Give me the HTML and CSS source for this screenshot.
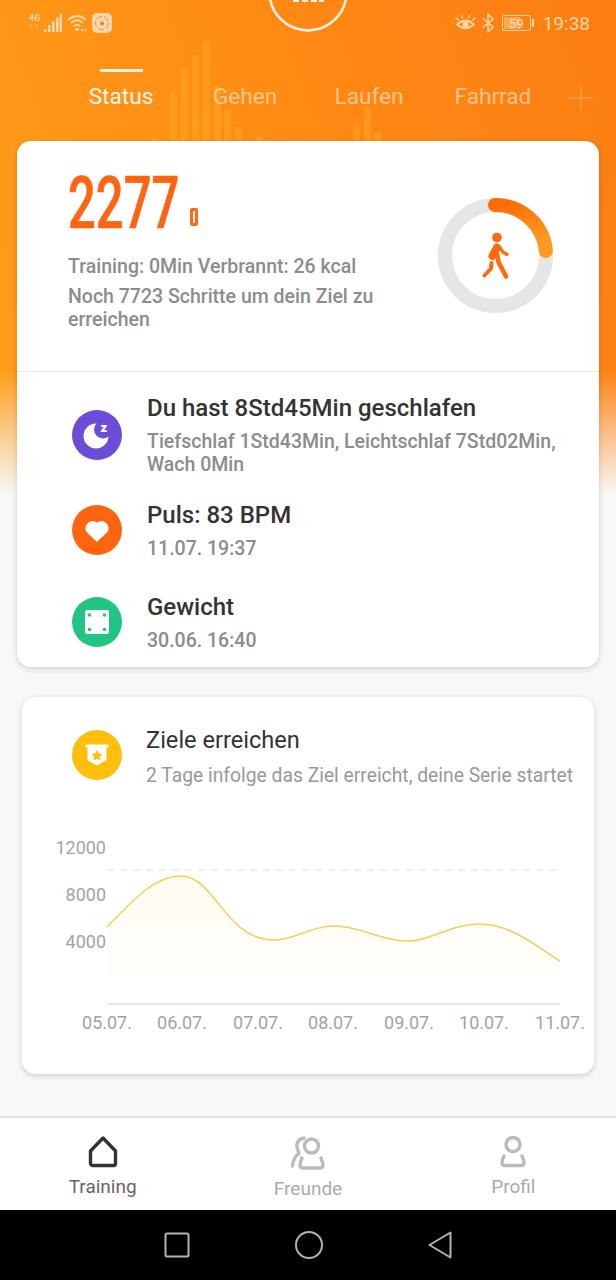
FILE: index.html
```html
<!DOCTYPE html>
<html>
<head>
    <title>Status</title>
    <link rel="stylesheet" href="styles.css">
</head>
<body>
    <div class="phone">
        <!-- faint bars behind the tabs -->
        <svg class="hero-bars" width="616" height="141" viewBox="0 0 616 141">
            <rect x="150" y="137" width="7" height="10" rx="3"/>
            <rect x="170" y="91" width="7" height="60" rx="3"/>
            <rect x="181" y="68" width="7" height="80" rx="3"/>
            <rect x="192" y="55" width="7" height="90" rx="3"/>
            <rect x="203" y="41" width="7" height="100" rx="3"/>
            <rect x="214" y="85" width="7" height="60" rx="3"/>
            <rect x="224" y="108" width="7" height="40" rx="3"/>
            <rect x="235" y="127" width="7" height="20" rx="3"/>
            <rect x="256" y="136" width="7" height="10" rx="3"/>
            <rect x="353" y="125" width="7" height="20" rx="3"/>
            <rect x="364" y="107" width="7" height="40" rx="3"/>
            <rect x="374" y="132" width="7" height="14" rx="3"/>
        </svg>

        <!-- call badge cut off by the top of the screen -->
        <svg class="top-badge" width="84" height="36" viewBox="0 0 84 36">
            <circle cx="42" cy="-8" r="38.5" fill="none" stroke="#fff4e2" stroke-width="2.5"/>
            <rect x="27" y="0" width="6" height="2" fill="#fff4e2"/>
            <rect x="36" y="0" width="6" height="2" fill="#fff4e2"/>
            <rect x="45" y="0" width="6" height="2" fill="#fff4e2"/>
            <rect x="53" y="0" width="5" height="2" fill="#fff4e2"/>
        </svg>

        <div class="statusbar">
            <div class="status-group">
                <div class="net-label">
                    <span class="net-top">4G</span>
                    <span class="net-bottom">1.1</span>
                </div>
                <svg width="18" height="18" viewBox="0 0 18 18" class="status-icon">
                    <rect x="0" y="15" width="2.4" height="3"/>
                    <rect x="4" y="11" width="2.6" height="7"/>
                    <rect x="8" y="7" width="2.6" height="11"/>
                    <rect x="12" y="3.5" width="2.6" height="14.5"/>
                    <rect x="15.6" y="0" width="2.4" height="18"/>
                </svg>
                <svg width="20" height="18" viewBox="0 0 20 18" class="wifi">
                    <path d="M1 6 Q10 -2 19 6"/>
                    <path d="M4 9 Q10 3.5 16 9"/>
                    <path d="M7 12 Q10 9.5 13 12"/>
                    <circle cx="10" cy="15.5" r="1.8" class="wifi-dot"/>
                    <circle cx="15" cy="16" r="1.2" class="wifi-dot"/>
                    <circle cx="18.5" cy="16" r="1.2" class="wifi-dot"/>
                </svg>
                <svg width="20" height="20" viewBox="0 0 20 20">
                    <rect width="20" height="20" rx="5" fill="#fbd6a6"/>
                    <circle cx="10" cy="10" r="6.5" fill="none" stroke="#e6934a" stroke-width="1" stroke-dasharray="6 2"/>
                    <circle cx="10" cy="10.5" r="2" fill="#d98a3e"/>
                </svg>
            </div>
            <div class="status-group status-right">
                <svg width="21" height="18" viewBox="0 0 21 18" class="eye">
                    <path d="M2 10.5 Q10.5 2.5 19 10.5 Q10.5 18 2 10.5 Z"/>
                    <path d="M3.5 6.5 L1 3.5 M7.5 4 L6.5 1 M13.5 4 L14.5 1 M17.5 6.5 L20 3.5"/>
                    <circle cx="10.5" cy="10.5" r="3" class="eye-dot"/>
                </svg>
                <svg width="12" height="20" viewBox="0 0 12 20" class="bluetooth">
                    <path d="M1 5.5 L11 14 L6 19 V1 L11 6 L1 14.5"/>
                </svg>
                <div class="battery">
                    <div class="battery-body">
                        <span class="battery-fill"></span>
                        <span class="battery-num">59</span>
                    </div>
                    <span class="battery-nub"></span>
                </div>
                <span class="clock">19:38</span>
            </div>
        </div>

        <div class="tabs">
            <div class="tab tab-active">Status</div>
            <div class="tab">Gehen</div>
            <div class="tab">Laufen</div>
            <div class="tab">Fahrrad</div>
            <svg class="tab-plus" width="24" height="24" viewBox="0 0 24 24">
                <path d="M12 0 V24 M0 12 H24"/>
            </svg>
        </div>

        <div class="main">
            <div class="card card-summary">
                <div class="steps">
                    <div class="steps-text">
                        <div class="steps-count">
                            <span class="steps-number">2277</span>
                            <span class="band-icon"></span>
                        </div>
                        <p class="steps-line">Training: 0Min Verbrannt: 26 kcal</p>
                        <p class="steps-goal">Noch 7723 Schritte um dein Ziel zu erreichen</p>
                    </div>
                    <svg class="ring" width="116" height="116" viewBox="438 198 116 116">
                        <defs>
                            <linearGradient id="ringGrad" x1="0" y1="0" x2="0.4" y2="1">
                                <stop offset="0" stop-color="#ff6a05"/>
                                <stop offset="1" stop-color="#ff9a1f"/>
                            </linearGradient>
                        </defs>
                        <circle cx="495.5" cy="255.5" r="50.5" fill="none" stroke="#e6e6e6" stroke-width="14"/>
                        <path d="M495 205 A50.5 50.5 0 0 1 545.9 251" fill="none" stroke="url(#ringGrad)" stroke-width="14" stroke-linecap="round"/>
                        <circle cx="497" cy="237.5" r="4.8" fill="#ff6a0c"/>
                        <path d="M497 247.5 L492.5 256" stroke="#ff6a0c" stroke-width="8" stroke-linecap="round"/>
                        <path d="M500 248 L503.5 252.5 L507 254.5" fill="none" stroke="#ff6a0c" stroke-width="3.4" stroke-linecap="round" stroke-linejoin="round"/>
                        <path d="M497 254 L498.5 262 L506 276.5" fill="none" stroke="#ff6a0c" stroke-width="4.6" stroke-linecap="round" stroke-linejoin="round"/>
                        <path d="M491.5 263 L491 268.5 L484.5 275.5" fill="none" stroke="#ff6a0c" stroke-width="4" stroke-linecap="round" stroke-linejoin="round"/>
                    </svg>
                </div>

                <div class="stats">
                    <div class="stat stat-sleep">
                        <svg class="stat-icon" width="50" height="50" viewBox="0 0 50 50">
                            <circle cx="25" cy="25" r="25" fill="#6b4dd8"/>
                            <circle cx="24" cy="26" r="12.5" fill="#fff"/>
                            <circle cx="31" cy="19.5" r="9" fill="#6b4dd8"/>
                            <text x="28.5" y="22" class="sleep-z">z</text>
                        </svg>
                        <div class="stat-text">
                            <h3 class="stat-title">Du hast 8Std45Min geschlafen</h3>
                            <p class="stat-sub">Tiefschlaf 1Std43Min, Leichtschlaf 7Std02Min, Wach 0Min</p>
                        </div>
                    </div>
                    <div class="stat">
                        <svg class="stat-icon" width="50" height="50" viewBox="0 0 50 50">
                            <circle cx="25" cy="25" r="25" fill="#ff6410"/>
                            <path d="M25 36 L15 26.5 A6.5 6.5 0 0 1 25 18.5 A6.5 6.5 0 0 1 35 26.5 Z" fill="#fff" stroke="#fff" stroke-width="1.5" stroke-linejoin="round"/>
                        </svg>
                        <div class="stat-text">
                            <h3 class="stat-title">Puls: 83 BPM</h3>
                            <p class="stat-sub">11.07. 19:37</p>
                        </div>
                    </div>
                    <div class="stat">
                        <svg class="stat-icon" width="50" height="50" viewBox="0 0 50 50">
                            <circle cx="25" cy="25" r="25" fill="#22c483"/>
                            <rect x="13" y="13" width="24" height="24" rx="2.5" fill="#fff"/>
                            <circle cx="17.5" cy="18" r="1.8" fill="#22c483"/>
                            <circle cx="32.5" cy="18" r="1.8" fill="#22c483"/>
                            <circle cx="17.5" cy="32.5" r="1.8" fill="#22c483"/>
                            <circle cx="32.5" cy="32.5" r="1.8" fill="#22c483"/>
                        </svg>
                        <div class="stat-text">
                            <h3 class="stat-title">Gewicht</h3>
                            <p class="stat-sub">30.06. 16:40</p>
                        </div>
                    </div>
                </div>
            </div>

            <div class="card card-goal">
                <div class="goal-head">
                    <svg class="stat-icon goal-icon" width="50" height="50" viewBox="0 0 50 50">
                        <circle cx="25" cy="25" r="25" fill="#ffbf0a"/>
                        <path d="M14 15 H36 V17 H34 V30 L25 35 L16 30 V17 H14 Z" fill="#fff" stroke="#fff" stroke-width="1" stroke-linejoin="round"/>
                        <path d="M25 20 L26.8 23.6 L30.6 24 L27.8 26.6 L28.6 30.4 L25 28.5 L21.4 30.4 L22.2 26.6 L19.4 24 L23.2 23.6 Z" fill="#ffbf0a"/>
                    </svg>
                    <div>
                        <h3 class="goal-title">Ziele erreichen</h3>
                        <p class="goal-sub">2 Tage infolge das Ziel erreicht, deine Serie startet</p>
                    </div>
                </div>
                <svg class="chart" width="573" height="210" viewBox="22 830 573 210">
                    <defs>
                        <linearGradient id="areaGrad" x1="0" y1="0" x2="0" y2="1">
                            <stop offset="0" stop-color="#ffd966" stop-opacity="0.1"/>
                            <stop offset="1" stop-color="#ffd966" stop-opacity="0.03"/>
                        </linearGradient>
                    </defs>
                    <text x="106" y="854" class="axis-label axis-y">12000</text>
                    <text x="106" y="901" class="axis-label axis-y">8000</text>
                    <text x="106" y="948" class="axis-label axis-y">4000</text>
                    <line x1="107" y1="870" x2="560" y2="870" class="line-goal"/>
                    <path d="M107 975 V927 C125 910 150 876 181 876 C215 876 225 940 274 940 C295 940 310 926 335 926 C360 926 380 941 410 941 C430 941 450 924 480 924 C510 924 535 945 560 961 V975 Z" fill="url(#areaGrad)"/>
                    <path d="M107 927 C125 910 150 876 181 876 C215 876 225 940 274 940 C295 940 310 926 335 926 C360 926 380 941 410 941 C430 941 450 924 480 924 C510 924 535 945 560 961" class="line-steps"/>
                    <line x1="107" y1="1004" x2="560" y2="1004" class="line-axis"/>
                    <text x="107" y="1029" class="axis-label axis-x">05.07.</text>
                    <text x="182" y="1029" class="axis-label axis-x">06.07.</text>
                    <text x="258" y="1029" class="axis-label axis-x">07.07.</text>
                    <text x="333" y="1029" class="axis-label axis-x">08.07.</text>
                    <text x="409" y="1029" class="axis-label axis-x">09.07.</text>
                    <text x="484" y="1029" class="axis-label axis-x">10.07.</text>
                    <text x="560" y="1029" class="axis-label axis-x">11.07.</text>
                </svg>
            </div>
        </div>

        <div class="tabbar">
            <div class="tabbar-item tabbar-active">
                <svg width="30" height="32" viewBox="0 0 30 32" class="nav-icon">
                    <path d="M15 2 L27.5 15 V27.5 a2 2 0 0 1 -2 2 H4.5 a2 2 0 0 1 -2 -2 V15 Z"/>
                </svg>
                <span>Training</span>
            </div>
            <div class="tabbar-item">
                <svg width="34" height="34" viewBox="0 0 34 34" class="nav-icon">
                    <circle cx="20.5" cy="10" r="7"/>
                    <path d="M11 22 Q9 26 9 29 Q9 32 12 32 H29 Q32 32 32 29 Q32 26 30 22"/>
                    <path d="M13 2 Q5 4 6 11 Q7 15 8 17 Q2 22 1.5 30"/>
                </svg>
                <span>Freunde</span>
            </div>
            <div class="tabbar-item">
                <svg width="26" height="32" viewBox="0 0 26 32" class="nav-icon">
                    <circle cx="13" cy="8.5" r="7"/>
                    <path d="M4 20 Q2 24 2 26.5 Q2 29.5 5 29.5 H21 Q24 29.5 24 26.5 Q24 24 22 20"/>
                </svg>
                <span>Profil</span>
            </div>
        </div>

        <div class="sysbar">
            <svg width="26" height="26" viewBox="0 0 26 26">
                <rect x="1.5" y="1.5" width="23" height="23" rx="1.5"/>
            </svg>
            <svg width="28" height="28" viewBox="0 0 28 28">
                <circle cx="14" cy="14" r="13"/>
            </svg>
            <svg width="24" height="28" viewBox="0 0 24 28">
                <path d="M22.5 1.5 V26.5 L1.5 14 Z"/>
            </svg>
        </div>
    </div>
</body>
</html>
```

FILE: styles.css
```css
body {
    margin: 0;
    background-color: #000;
    font-family: Roboto, "Liberation Sans", sans-serif;
}

p, h3 {
    margin: 0;
}

.phone {
    position: relative;
    width: 616px;
    height: 1280px;
    overflow: hidden;
    display: flex;
    flex-direction: column;
    background-color: #f8f8f8;
    background-image:
        linear-gradient(to bottom, rgba(248, 248, 248, 0) 370px, #f8f8f8 495px),
        linear-gradient(70deg, #ff9f1a 0%, #ff8a14 55%, #fc7d12 100%);
    background-size: 100% 495px;
    background-repeat: no-repeat;
}

/* Header */
.hero-bars {
    position: absolute;
    top: 0;
    left: 0;
    fill: rgba(255, 176, 40, 0.4);
}

.top-badge {
    position: absolute;
    top: 0;
    left: 266px;
}

.statusbar {
    position: relative;
    height: 46px;
    display: flex;
    justify-content: space-between;
    align-items: center;
    padding: 0 26px 0 29px;
}

.status-group {
    display: flex;
    align-items: center;
    gap: 5px;
}

.status-right {
    gap: 6px;
}

.status-icon {
    fill: #fbd6a6;
}

.net-label {
    width: 10px;
    display: flex;
    flex-direction: column;
    color: #fbd6a6;
    font-size: 9px;
    line-height: 9px;
    font-weight: 700;
}

.net-bottom {
    opacity: 0.5;
    font-size: 7px;
}

.wifi {
    fill: none;
    stroke: #fbd6a6;
    stroke-width: 2;
}

.wifi-dot {
    fill: #fbd6a6;
    stroke: none;
}

.eye {
    fill: none;
    stroke: #fbd6a6;
    stroke-width: 1.8;
}

.eye-dot {
    fill: #fbd6a6;
    stroke: none;
}

.bluetooth {
    fill: none;
    stroke: #fbd6a6;
    stroke-width: 1.5;
}

.battery {
    display: flex;
    align-items: center;
    gap: 1px;
    margin-left: 2px;
}

.battery-body {
    position: relative;
    width: 29px;
    height: 16px;
    box-sizing: border-box;
    border: 1px solid #fbd6a6;
    border-radius: 2px;
    display: flex;
    justify-content: center;
    align-items: center;
}

.battery-fill {
    position: absolute;
    top: 1px;
    bottom: 1px;
    left: 1px;
    width: 60%;
    background-color: rgba(251, 214, 166, 0.45);
}

.battery-num {
    position: relative;
    color: #fde3c2;
    font-size: 13px;
}

.battery-nub {
    width: 2px;
    height: 8px;
    background-color: #fbd6a6;
}

.clock {
    margin-left: 3px;
    color: #fbd6a6;
    font-size: 19px;
}

.tabs {
    position: relative;
    height: 95px;
    box-sizing: border-box;
    padding: 23px 0 0 59px;
    display: flex;
}

.tab {
    width: 124px;
    text-align: center;
    color: rgba(255, 235, 210, 0.65);
    font-size: 22.6px;
    line-height: 28px;
}

.tab::before {
    content: "";
    display: block;
    width: 43px;
    height: 3px;
    margin: 0 auto 11px;
}

.tab-active {
    color: #fff8ec;
}

.tab-active::before {
    background-color: #fff4e2;
}

.tab-plus {
    margin: 17px 0 0 14px;
    fill: none;
    stroke: rgba(255, 235, 210, 0.2);
    stroke-width: 2;
}

/* Cards */
.main {
    position: relative;
    flex: 1;
    padding: 0 17px;
}

.card {
    background-color: #fff;
    border-radius: 14px;
    box-shadow: 0 2px 6px rgba(0, 0, 0, 0.16);
}

.steps {
    height: 231px;
    box-sizing: border-box;
    padding: 32px 45px 0 51px;
    display: flex;
    justify-content: space-between;
    border-bottom: 1px solid #ebebeb;
}

.steps-text {
    width: 320px;
}

.steps-count {
    display: flex;
    align-items: flex-end;
    height: 66px;
}

.steps-number {
    display: block;
    width: 111px;
    color: #ff6410;
    font-size: 72px;
    line-height: 70px;
    font-weight: 500;
    -webkit-text-stroke: 0.6px #ff6410;
    transform: scaleX(0.68);
    transform-origin: left center;
}

.band-icon {
    width: 2px;
    height: 12px;
    margin: 0 0 13px 11px;
    border: 3px solid #ff6a14;
    border-radius: 2px;
    background-color: #fff;
}

.steps-line, .steps-goal {
    color: #8c8c8c;
    font-size: 19.5px;
    line-height: 23px;
    font-weight: 500;
}

.steps-line {
    margin-top: 16px;
}

.steps-goal {
    margin-top: 7px;
}

.ring {
    margin-top: 25px;
}

.stats {
    padding: 21px 30px 15px 55px;
}

.stat {
    display: flex;
    align-items: center;
    gap: 25px;
    margin-bottom: 32px;
}

.stat:last-child {
    margin-bottom: 0;
}

.stat-sleep {
    margin-bottom: 24px;
}

.stat-icon {
    flex-shrink: 0;
}

.sleep-z {
    fill: #fff;
    font-size: 13px;
    font-weight: 900;
}

.stat-title {
    color: #333;
    font-size: 24px;
    line-height: 30px;
    font-weight: 500;
}

.stat-sub {
    margin-top: 7px;
    color: #8c8c8c;
    font-size: 19.5px;
    line-height: 23px;
    font-weight: 500;
}

.card-goal {
    margin: 30px 5px 0;
    height: 377px;
}

.goal-head {
    padding: 28px 0 0 50px;
    display: flex;
    align-items: flex-start;
    gap: 24px;
}

.goal-icon {
    margin-top: 5px;
}

.goal-title {
    color: #333;
    font-size: 23.6px;
    line-height: 30px;
    font-weight: 400;
}

.goal-sub {
    margin-top: 9px;
    color: #999;
    font-size: 19.3px;
    line-height: 24px;
    white-space: nowrap;
}

.chart {
    display: block;
    margin-top: 42px;
}

.axis-label {
    fill: #a3a3a3;
    font-size: 18px;
}

.axis-y {
    text-anchor: end;
}

.axis-x {
    text-anchor: middle;
}

.line-goal {
    stroke: #dedede;
    stroke-width: 1;
    stroke-dasharray: 7 6;
}

.line-axis {
    stroke: #d0d0d0;
    stroke-width: 1;
}

.line-steps {
    fill: none;
    stroke: #efd05a;
    stroke-width: 1.5;
}

/* Bottom navigation */
.tabbar {
    position: relative;
    height: 94px;
    box-sizing: border-box;
    border-top: 2px solid #e4e4e4;
    background-color: #fff;
    display: grid;
    grid-template-columns: repeat(3, 1fr);
}

.tabbar-item {
    padding-top: 18px;
    display: flex;
    flex-direction: column;
    align-items: center;
    gap: 7px;
    color: #aaa;
    font-size: 19px;
    line-height: 24px;
}

.tabbar-active {
    color: #666;
}

.nav-icon {
    fill: none;
    stroke: #bbb;
    stroke-width: 3.4;
    stroke-linejoin: round;
    stroke-linecap: round;
}

.tabbar-active .nav-icon {
    stroke: #333;
}

.sysbar {
    position: relative;
    height: 70px;
    background-color: #000;
    display: flex;
    justify-content: center;
    align-items: center;
    gap: 105px;
}

.sysbar svg {
    fill: none;
    stroke: #b3b3b3;
    stroke-width: 2;
    stroke-linejoin: round;
}
```
